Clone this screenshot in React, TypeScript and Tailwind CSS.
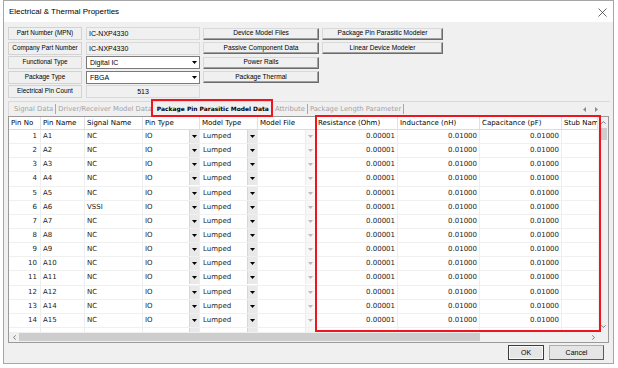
import React from "react";

const pins: [string, string, string][] = [
  ["1", "A1", "NC"],
  ["2", "A2", "NC"],
  ["3", "A3", "NC"],
  ["4", "A4", "NC"],
  ["5", "A5", "NC"],
  ["6", "A6", "VSSI"],
  ["7", "A7", "NC"],
  ["8", "A8", "NC"],
  ["9", "A9", "NC"],
  ["10", "A10", "NC"],
  ["11", "A11", "NC"],
  ["12", "A12", "NC"],
  ["13", "A14", "NC"],
  ["14", "A15", "NC"],
  ["", "", ""],
];

function Tri({ color = "#000" }: { color?: string }) {
  return (
    <svg width="5" height="3" viewBox="0 0 5 3">
      <path d="M0 0h5L2.5 3z" fill={color} />
    </svg>
  );
}

function Label({ text }: { text: string }) {
  return (
    <div className="w-[74px] h-full flex items-center justify-center border border-[#d2d2d2] bg-[#f0f0f0] text-black text-[6.4px] whitespace-nowrap">
      {text}
    </div>
  );
}

function Btn({ text, w }: { text: string; w: string }) {
  return (
    <div
      className={`${w} h-[12px] ml-[3px] flex items-center justify-center bg-[#f0f0f0] border border-[#d9d9d9] border-r-[#6b6b6b] border-b-[#6b6b6b] shadow-[inset_-1px_-1px_0_#a0a0a0] text-black text-[6.6px]`}
    >
      {text}
    </div>
  );
}

function Combo({ text }: { text: string }) {
  return (
    <div className="w-[114px] h-full ml-[4px] flex items-center bg-white border border-[#7a7a7a]">
      <span className="flex-1 pl-[3px]">{text}</span>
      <span className="w-[10px] h-full flex items-center justify-center">
        <Tri />
      </span>
    </div>
  );
}

function ReadOnly({ text, center }: { text: string; center?: boolean }) {
  return (
    <div
      className={`w-[114px] h-full ml-[4px] flex items-center border border-[#d9d9d9] bg-[#f0f0f0] ${center ? "justify-center" : "pl-[2px]"}`}
    >
      {text}
    </div>
  );
}

function DropBtn({ light }: { light?: boolean }) {
  return (
    <div
      className={`w-[10px] h-[13px] flex items-center justify-center border-l ${light ? "bg-[#f7f7f7] border-[#ececec]" : "bg-[#e9e9e9] border-[#d6d6d6]"}`}
    >
      <Tri color={light ? "#b8b8b8" : "#000"} />
    </div>
  );
}

const cell = "h-full border-r border-[#eeeeee] flex items-center";

function Row({ p }: { p: [string, string, string] }) {
  const blank = p[0] === "";
  return (
    <div className="h-[14.15px] shrink-0 flex border-b border-[#f0f0f0] text-[#222]">
      <div className={`${cell} w-[32px] justify-end pr-[3px]`}>{p[0]}</div>
      <div className={`${cell} w-[44px] pl-[2px]`}>{p[1]}</div>
      <div className={`${cell} w-[58px] pl-[2px]`}>{p[2]}</div>
      <div className={`${cell} w-[57px] pl-[2px] justify-between`}>
        <span>{blank ? "" : "IO"}</span>
        <DropBtn />
      </div>
      <div className={`${cell} w-[58px] pl-[3px] justify-between`}>
        <span>{blank ? "" : "Lumped"}</span>
        <DropBtn />
      </div>
      <div className={`${cell} w-[58px] justify-end`}>
        <DropBtn light />
      </div>
      <div className={`${cell} w-[82px] justify-end pr-[2px]`}>{blank ? "" : "0.00001"}</div>
      <div className={`${cell} w-[82px] justify-end pr-[2px]`}>{blank ? "" : "0.01000"}</div>
      <div className={`${cell} w-[82px] justify-end pr-[2px]`}>{blank ? "" : "0.01000"}</div>
      <div className="h-full w-[36px]" />
    </div>
  );
}

function Head({ text, w }: { text: string; w: string }) {
  return (
    <div className={`${w} h-full pl-[2px] flex items-center border-r border-[#e2e2e2] overflow-hidden whitespace-nowrap`}>
      {text}
    </div>
  );
}

function Tab({ text, active, sep = true }: { text: string; active?: boolean; sep?: boolean }) {
  return (
    <div className="flex items-center h-full">
      <span
        className={
          active
            ? "pl-[3px] pr-[4px] font-bold text-black text-[5.95px]"
            : "px-[2px] text-[#a3a3a3]"
        }
      >
        {text}
      </span>
      {sep && <span className="w-px h-[10px] bg-[#a8a8a8]" />}
    </div>
  );
}

export default function App() {
  return (
    <div className="relative w-[618px] h-[368px] bg-white overflow-hidden font-['Liberation_Sans',sans-serif] text-[7px] leading-none">
      <div className="ml-[3px] w-[611px] h-[364px] border border-[#a6a6a6] flex flex-col bg-[#f0f0f0]">
        {/* title bar */}
        <div className="h-[21px] bg-white flex items-center justify-between pl-[5px] pr-[6px] pt-[1px] shrink-0">
          <span className="text-[8px] text-black">Electrical &amp; Thermal Properties</span>
          <svg width="9" height="9" viewBox="0 0 9 9">
            <path d="M0.5 0.5l8 8M8.5 0.5l-8 8" stroke="#444" strokeWidth="0.8" />
          </svg>
        </div>

        <div className="flex-1 flex flex-col pl-[4px] pr-[3px] pt-[5px]">
          {/* form */}
          <div className="flex flex-col gap-[1.5px]">
            <div className="flex h-[13px] items-center">
              <Label text="Part Number (MPN)" />
              <ReadOnly text="IC-NXP4330" />
              <Btn text="Device Model Files" w="w-[116px]" />
              <Btn text="Package Pin Parasitic Modeler" w="w-[121px]" />
            </div>
            <div className="flex h-[13px] items-center">
              <Label text="Company Part Number" />
              <ReadOnly text="IC-NXP4330" />
              <Btn text="Passive Component Data" w="w-[116px]" />
              <Btn text="Linear Device Modeler" w="w-[121px]" />
            </div>
            <div className="flex h-[13px] items-center">
              <Label text="Functional Type" />
              <Combo text="Digital IC" />
              <Btn text="Power Rails" w="w-[116px]" />
            </div>
            <div className="flex h-[13px] items-center">
              <Label text="Package Type" />
              <Combo text="FBGA" />
              <Btn text="Package Thermal" w="w-[116px]" />
            </div>
            <div className="flex h-[13px] items-center">
              <Label text="Electrical Pin Count" />
              <ReadOnly text="513" center />
            </div>
          </div>

          {/* tabs */}
          <div className="mt-[3px] h-[15px] shrink-0 flex items-center pl-[3px] border-t border-l border-[#d9d9d9] font-['DejaVu_Sans',sans-serif] text-[6.8px]">
            <Tab text="Signal Data" />
            <Tab text="Driver/Receiver Model Data" sep={false} />
            <Tab text="Package Pin Parasitic Model Data" active sep={false} />
            <Tab text="Attribute" />
            <Tab text="Package Length Parameter" />
            <div className="flex-1" />
            <div className="flex items-center gap-[9px] pr-[12px]">
              <svg width="3" height="5" viewBox="0 0 3 5">
                <path d="M3 0v5L0 2.5z" fill="#8a8a8a" />
              </svg>
              <svg width="3" height="5" viewBox="0 0 3 5">
                <path d="M0 0v5L3 2.5z" fill="#8a8a8a" />
              </svg>
            </div>
          </div>

          {/* grid */}
          <div className="w-[601px] h-[227px] shrink-0 border border-[#9a9a9a] bg-white flex flex-col font-['DejaVu_Sans',sans-serif] text-[7px]">
            <div className="flex flex-1 min-h-0">
              <div className="w-[589px] flex flex-col min-h-0">
                <div className="h-[13px] shrink-0 flex border-b border-[#dcdcdc] text-black">
                  <Head text="Pin No" w="w-[32px]" />
                  <Head text="Pin Name" w="w-[44px]" />
                  <Head text="Signal Name" w="w-[58px]" />
                  <Head text="Pin Type" w="w-[57px]" />
                  <Head text="Model Type" w="w-[58px]" />
                  <Head text="Model File" w="w-[58px]" />
                  <Head text="Resistance (Ohm)" w="w-[82px]" />
                  <Head text="Inductance (nH)" w="w-[82px]" />
                  <Head text="Capacitance (pF)" w="w-[82px]" />
                  <Head text="Stub Name" w="w-[36px]" />
                </div>
                <div className="flex-1 min-h-0 overflow-hidden flex flex-col">
                  {pins.map((p, i) => (
                    <Row key={i} p={p} />
                  ))}
                </div>
              </div>
              {/* vertical scrollbar */}
              <div className="w-[10px] bg-[#f0f0f0] flex flex-col items-center">
                <div className="h-[11px] flex items-center justify-center">
                  <svg width="5" height="3" viewBox="0 0 5 3">
                    <path d="M0.3 2.7L2.5 0.6L4.7 2.7" stroke="#606060" strokeWidth="0.8" fill="none" />
                  </svg>
                </div>
                <div className="w-[8px] h-[12px] bg-[#cdcdcd]" />
                <div className="flex-1" />
                <div className="h-[11px] flex items-center justify-center">
                  <svg width="5" height="3" viewBox="0 0 5 3">
                    <path d="M0.3 0.3L2.5 2.4L4.7 0.3" stroke="#606060" strokeWidth="0.8" fill="none" />
                  </svg>
                </div>
              </div>
            </div>
            {/* horizontal scrollbar */}
            <div className="h-[10px] shrink-0 flex">
              <div className="w-[589px] bg-[#f0f0f0] flex items-center">
                <div className="w-[10px] flex justify-center">
                  <svg width="3" height="5" viewBox="0 0 3 5">
                    <path d="M2.7 0.3L0.6 2.5L2.7 4.7" stroke="#606060" strokeWidth="0.8" fill="none" />
                  </svg>
                </div>
                <div className="w-[461px] h-[8px] bg-[#cdcdcd]" />
                <div className="flex-1" />
                <div className="w-[10px] flex justify-center">
                  <svg width="3" height="5" viewBox="0 0 3 5">
                    <path d="M0.3 0.3L2.4 2.5L0.3 4.7" stroke="#606060" strokeWidth="0.8" fill="none" />
                  </svg>
                </div>
              </div>
              <div className="flex-1 bg-[#f0f0f0]" />
            </div>
          </div>

          {/* dialog buttons */}
          <div className="mt-[2px] flex justify-end pr-[6px]">
            <div className="w-[36px] h-[15px] flex items-center justify-center bg-[#e5e5e5] border border-[#3c3c3c] shadow-[inset_0_0_0_1px_#f8f8f8] text-black">
              OK
            </div>
            <div className="w-[55px] h-[15px] ml-[5px] flex items-center justify-center bg-[#e5e5e5] border border-[#adadad] border-r-[#5a5a5a] border-b-[#5a5a5a] text-black">
              Cancel
            </div>
          </div>
        </div>
      </div>

      {/* highlight overlays */}
      <div className="absolute left-[151px] top-[99px] w-[122px] h-[18px] border-2 border-[#f0141e]" />
      <div className="absolute left-[315px] top-[115px] w-[286px] h-[217px] border-2 border-[#f0141e]" />
    </div>
  );
}
